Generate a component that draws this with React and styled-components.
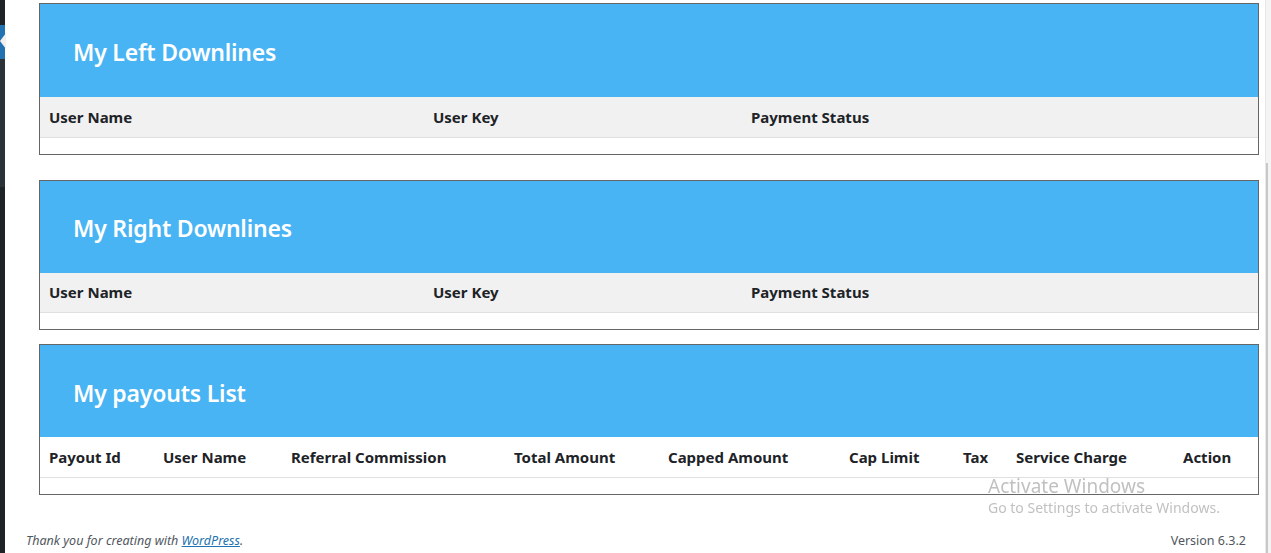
import React from 'react';
import styled, { createGlobalStyle } from 'styled-components';

const GlobalStyle = createGlobalStyle`
  html, body {
    margin: 0;
    padding: 0;
    background: #fff;
    font-family: 'Noto Sans', 'Open Sans', sans-serif;
    color: #1d2327;
  }
`;

const colors = {
  blue: '#48b4f4',
  border: '#666',
  rowLine: '#e0e0e0',
  headGray: '#f1f1f1',
  menuDark: '#1d2327',
  menuSub: '#2c3338',
  menuActive: '#2271b1'
};

const Page = styled.div`
  display: flex;
  height: 553px;
  overflow: hidden;
`;

const AdminMenu = styled.div`
  width: 5px;
  flex: none;
  display: flex;
  flex-direction: column;
  background: ${colors.menuDark};
`;

const MenuBlock = styled.div`
  height: ${props => props.$h}px;
  flex: ${props => (props.$grow ? 1 : 'none')};
  background: ${props => props.$bg};
  position: relative;
`;

const CurrentArrow = styled.span`
  position: absolute;
  left: 0;
  top: 8px;
  width: 0;
  height: 0;
  border-top: 8px solid transparent;
  border-bottom: 8px solid transparent;
  border-right: 6px solid #f0f0f1;
`;

const Main = styled.div`
  flex: 1;
  display: flex;
  flex-direction: column;
  min-width: 0;
`;

const Content = styled.div`
  padding: 3px 6px 0 34px;
  display: flex;
  flex-direction: column;
`;

const Card = styled.section`
  border: 1px solid ${colors.border};
  margin-top: ${props => props.$gap}px;
`;

const CardHead = styled.div`
  box-sizing: border-box;
  background: ${colors.blue};
  height: ${props => props.$h}px;
  display: flex;
  align-items: center;
  padding: 3px 0 0 33px;
`;

const CardTitle = styled.h2`
  margin: 0;
  color: #fff;
  font-size: 23px;
  font-weight: 600;
  letter-spacing: -0.2px;
`;

const Table = styled.table`
  width: 100%;
  border-collapse: collapse;
  table-layout: fixed;
`;

const HeadRow = styled.tr`
  background: ${props => (props.$plain ? '#fff' : colors.headGray)};
`;

const Th = styled.th`
  box-sizing: border-box;
  height: 40px;
  padding: 0 0 0 9px;
  text-align: left;
  font-size: 15px;
  font-weight: 700;
  color: #1d2327;
  white-space: nowrap;
  width: ${props => (props.$w ? `${props.$w}px` : 'auto')};
`;

const EmptyCell = styled.td`
  height: 16px;
  padding: 0;
  border-top: 1px solid ${colors.rowLine};
`;

const Footer = styled.footer`
  margin-top: auto;
  display: flex;
  justify-content: space-between;
  align-items: center;
  padding: 0 19px 4px 21px;
  font-size: 12.5px;
  color: #50575e;
`;

const Thanks = styled.p`
  margin: 0;
  font-style: italic;

  a {
    color: #2271b1;
  }
`;

const Version = styled.p`
  margin: 0;
`;

const ScrollTrack = styled.div`
  width: 5px;
  flex: none;
  background: #f4f4f4;
  border-left: 1px solid #e8e8e8;
  position: relative;
`;

const ScrollThumb = styled.div`
  position: absolute;
  left: 0;
  top: 163px;
  bottom: 0;
  width: 2px;
  background: #c8c8c8;
`;

const Watermark = styled.div`
  position: fixed;
  left: 988px;
  top: 474px;
  color: rgba(140, 140, 140, 0.55);
  pointer-events: none;
  font-family: 'Noto Sans', 'Open Sans', sans-serif;
`;

const WatermarkTitle = styled.div`
  font-size: 19px;
  line-height: 24px;
`;

const WatermarkText = styled.div`
  font-size: 14px;
  line-height: 20px;
`;

const downlineCols = [
  { label: 'User Name', w: 384 },
  { label: 'User Key', w: 318 },
  { label: 'Payment Status' }
];

const payoutCols = [
  { label: 'Payout Id', w: 114 },
  { label: 'User Name', w: 128 },
  { label: 'Referral Commission', w: 223 },
  { label: 'Total Amount', w: 154 },
  { label: 'Capped Amount', w: 181 },
  { label: 'Cap Limit', w: 114 },
  { label: 'Tax', w: 53 },
  { label: 'Service Charge', w: 167 },
  { label: 'Action' }
];

const ListCard = ({ title, cols, gap, headHeight, plainHead }) => (
  <Card $gap={gap}>
    <CardHead $h={headHeight}>
      <CardTitle>{title}</CardTitle>
    </CardHead>
    <Table>
      <thead>
        <HeadRow $plain={plainHead}>
          {cols.map(col => (
            <Th key={col.label} $w={col.w}>
              {col.label}
            </Th>
          ))}
        </HeadRow>
      </thead>
      <tbody>
        <tr>
          <EmptyCell colSpan={cols.length} />
        </tr>
      </tbody>
    </Table>
  </Card>
);

const App = () => (
  <>
    <GlobalStyle />
    <Page>
      <AdminMenu>
        <MenuBlock $h={25} $bg={colors.menuDark} />
        <MenuBlock $h={34} $bg={colors.menuActive}>
          <CurrentArrow />
        </MenuBlock>
        <MenuBlock $h={128} $bg={colors.menuSub} />
        <MenuBlock $grow $bg={colors.menuDark} />
      </AdminMenu>
      <Main>
        <Content>
          <ListCard title="My Left Downlines" cols={downlineCols} gap={0} headHeight={93} />
          <ListCard title="My Right Downlines" cols={downlineCols} gap={25} headHeight={92} />
          <ListCard title="My payouts List" cols={payoutCols} gap={14} headHeight={92} plainHead />
        </Content>
        <Footer>
          <Thanks>
            Thank you for creating with <a href="#wp">WordPress</a>.
          </Thanks>
          <Version>Version 6.3.2</Version>
        </Footer>
      </Main>
      <ScrollTrack>
        <ScrollThumb />
      </ScrollTrack>
    </Page>
    <Watermark>
      <WatermarkTitle>Activate Windows</WatermarkTitle>
      <WatermarkText>Go to Settings to activate Windows.</WatermarkText>
    </Watermark>
  </>
);

export default App;
